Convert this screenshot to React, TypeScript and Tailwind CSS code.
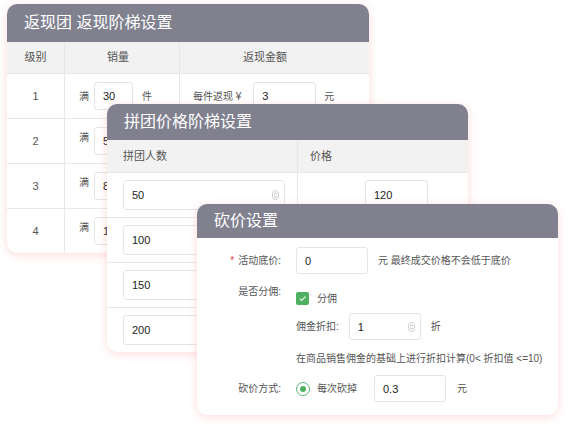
import React from "react";

const header =
  "flex shrink-0 items-center bg-[#80808f] pl-[17px] text-[16px] leading-none text-white";
const card =
  "absolute overflow-hidden rounded-[10px] bg-white shadow-[0_2px_10px_rgba(255,110,110,0.25)]";

// number-input stepper glyph
function Stepper() {
  return (
    <svg width="7" height="10" viewBox="0 0 7 10" className="shrink-0">
      <rect x="0.5" y="0.5" width="6" height="9" rx="3" fill="none" stroke="#cfcfcf" />
      <path d="M2.2 4.1L3.5 2.8L4.8 4.1M2.2 5.9L3.5 7.2L4.8 5.9" fill="none" stroke="#9a9a9a" strokeWidth="0.8" />
    </svg>
  );
}

function Field({
  value,
  className = "",
  stepper = false,
}: {
  value?: string;
  className?: string;
  stepper?: boolean;
}) {
  return (
    <div
      className={`flex shrink-0 items-center justify-between rounded-[3px] border border-[#e5e5e5] bg-white pl-[8px] pr-[5px] text-[11px] text-[#222] ${className}`}
    >
      <span>{value}</span>
      {stepper && <Stepper />}
    </div>
  );
}

// only the first tier is fully shown, the rest sit under the next panel
const cashbackRows = [
  { level: "1", qty: "30", amount: "3" },
  { level: "2", qty: "50" },
  { level: "3", qty: "80" },
  { level: "4", qty: "100" },
];

const groupRows = [
  { people: "50", price: "120" },
  { people: "100" },
  { people: "150" },
  { people: "200" },
];

function CashbackCard() {
  return (
    <div className={`${card} left-[7px] top-[4px] w-[362px]`}>
      <div className={`${header} h-[38px]`}>返现团 返现阶梯设置</div>
      <div className="grid h-[31px] grid-cols-[58px_115px_1fr] bg-[#f2f2f2] text-[11px] text-[#555]">
        <div className="flex items-center justify-center border-r border-[#e6e6e6]">级别</div>
        <div className="flex items-center border-r border-[#e6e6e6] pl-[42px]">销量</div>
        <div className="flex items-center pl-[63px]">返现金额</div>
      </div>
      {cashbackRows.map((r, i) => (
        <div
          key={r.level}
          className="grid h-[45px] grid-cols-[58px_115px_1fr] border-t border-[#e8e8e8] text-[10px] text-[#555]"
        >
          <div className="flex items-center justify-center border-r border-[#e8e8e8] text-[11px]">
            {r.level}
          </div>
          <div className="flex items-center border-r border-[#e8e8e8] pl-[14px]">
            <span className={i === 0 ? "" : "-mt-[8px]"}>满</span>
            <Field value={r.qty} className="ml-[5px] h-[28px] w-[39px] pl-[6px]" />
            {r.amount && <span className="ml-[9px]">件</span>}
          </div>
          <div className="flex items-center pl-[13px]">
            {r.amount && (
              <>
                <span>每件返现 ¥</span>
                <Field value={r.amount} className="ml-[12px] h-[28px] w-[63px] pl-[6px]" />
                <span className="ml-[8px]">元</span>
              </>
            )}
          </div>
        </div>
      ))}
    </div>
  );
}

function GroupPriceCard() {
  return (
    <div className={`${card} left-[107px] top-[104px] w-[361px]`}>
      <div className={`${header} h-[36px] pl-[16px]`}>拼团价格阶梯设置</div>
      <div className="grid h-[32px] grid-cols-[191px_1fr] bg-[#f2f2f2] text-[11px] text-[#555]">
        <div className="flex items-center border-r border-[#e6e6e6] pl-[16px]">拼团人数</div>
        <div className="flex items-center pl-[12px]">价格</div>
      </div>
      {groupRows.map((r) => (
        <div key={r.people} className="grid h-[45px] grid-cols-[191px_1fr] border-t border-[#e8e8e8]">
          <div className="flex items-center border-r border-[#e8e8e8] pl-[16px]">
            <Field value={r.people} stepper className="h-[30px] w-[162px]" />
          </div>
          <div className="flex items-center pl-[67px]">
            {r.price && <Field value={r.price} className="h-[30px] w-[63px]" />}
          </div>
        </div>
      ))}
    </div>
  );
}

function Label({ children, required = false }: { children: React.ReactNode; required?: boolean }) {
  return (
    <div className="w-[99px] shrink-0 pr-[15px] text-right text-[10px] leading-[12px] text-[#555]">
      {required && <span className="mr-[4px] text-[#e5383b]">*</span>}
      {children}
    </div>
  );
}

function BargainCard() {
  return (
    <div className={`${card} left-[197px] top-[204px] flex h-[211px] w-[361px] flex-col`}>
      <div className={`${header} h-[34px]`}>砍价设置</div>
      <div className="flex flex-col pt-[9px] text-[10px] leading-[12px] text-[#555]">
        <div className="flex items-center">
          <Label required>活动底价:</Label>
          <Field value="0" className="h-[27px] w-[72px]" />
          <span className="ml-[10px]">元 最终成交价格不会低于底价</span>
        </div>
        <div className="mt-[12px] flex">
          <Label>是否分佣:</Label>
          <div className="flex flex-col">
            <div className="mt-[6px] flex items-center">
              <span className="flex h-[13px] w-[13px] items-center justify-center rounded-[2px] bg-[#4fb062]">
                <svg width="9" height="9" viewBox="0 0 9 9">
                  <path d="M1.6 4.6L3.6 6.5L7.5 2.5" fill="none" stroke="#e8f5ea" strokeWidth="1.1" />
                </svg>
              </span>
              <span className="ml-[8px]">分佣</span>
            </div>
            <div className="mt-[8px] flex items-center">
              <span>佣金折扣:</span>
              <Field value="1" stepper className="ml-[10px] h-[27px] w-[72px]" />
              <span className="ml-[10px]">折</span>
            </div>
            <div className="mt-[13px]">在商品销售佣金的基础上进行折扣计算(0&lt; 折扣值 &lt;=10)</div>
          </div>
        </div>
        <div className="mt-[10px] flex items-center">
          <Label>砍价方式:</Label>
          <span className="flex h-[14px] w-[14px] items-center justify-center rounded-full border border-[#5cb87a]">
            <span className="h-[6px] w-[6px] rounded-full bg-[#4fb062]" />
          </span>
          <span className="ml-[7px]">每次砍掉</span>
          <Field value="0.3" className="ml-[17px] h-[27px] w-[72px]" />
          <span className="ml-[11px]">元</span>
        </div>
      </div>
    </div>
  );
}

export default function App() {
  return (
    <div className="relative h-[429px] w-[585px] overflow-hidden bg-white font-['Liberation_Sans','Noto_Sans_CJK_SC',sans-serif]">
      <CashbackCard />
      <GroupPriceCard />
      <BargainCard />
    </div>
  );
}
